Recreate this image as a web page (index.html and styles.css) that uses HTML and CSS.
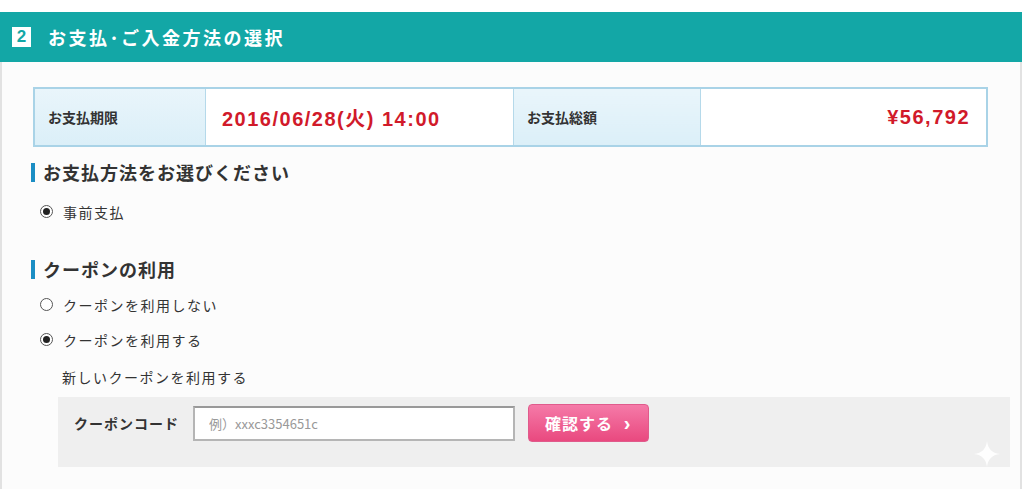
FILE: index.html
```html
<!DOCTYPE html>
<html lang="ja">
<head>
    <meta charset="UTF-8">
    <meta name="viewport" content="width=device-width, initial-scale=1.0">
    <title>お支払・ご入金方法の選択</title>
    <link rel="stylesheet" href="styles.css">
</head>
<body>

    <div class="page">
        <header class="section-head">
            <span class="step-no">2</span>
            <h1>お支払･ご入金方法の選択</h1>
        </header>

        <div class="section-body">
            <table class="summary">
                <tr>
                    <th class="col-label1">お支払期限</th>
                    <td class="col-date">2016/06/28(火) 14:00</td>
                    <th class="col-label2">お支払総額</th>
                    <td class="col-total">¥56,792</td>
                </tr>
            </table>

            <h2 class="sub-title">お支払方法をお選びください</h2>
            <label class="radio-row">
                <span class="radio checked"></span>事前支払
            </label>

            <h2 class="sub-title coupon-title">クーポンの利用</h2>
            <label class="radio-row">
                <span class="radio"></span>クーポンを利用しない
            </label>
            <label class="radio-row">
                <span class="radio checked"></span>クーポンを利用する
            </label>
            <p class="new-coupon">新しいクーポンを利用する</p>

            <div class="coupon-box">
                <span class="coupon-label">クーポンコード</span>
                <input class="coupon-input" type="text" placeholder="例）xxxc3354651c">
                <button class="confirm-btn">確認する <span class="chev">›</span></button>
                <svg class="sparkle" width="26" height="26" viewBox="0 0 26 26">
                    <path d="M13 0 C14 8 18 12 26 13 C18 14 14 18 13 26 C12 18 8 14 0 13 C8 12 12 8 13 0 Z" fill="#ffffff" opacity="0.9"/>
                </svg>
            </div>
        </div>
    </div>

</body>
</html>
```

FILE: styles.css
```css
body {
    font-family: "Noto Sans CJK JP", "Liberation Sans", sans-serif;
    background-color: #fff;
    color: #333;
    margin: 0;
    padding: 0;
}

.page {
    width: 1022px;
    margin-top: 12px;
}

.section-head {
    height: 50px;
    background-color: #13a7a6;
    display: flex;
    align-items: center;
    padding-left: 12px;
}

.step-no {
    width: 19px;
    height: 20px;
    background: #fff;
    color: #13a7a6;
    font-family: "Liberation Sans", sans-serif;
    font-weight: bold;
    font-size: 17px;
    line-height: 20px;
    text-align: center;
}

.section-head h1 {
    margin: 0 0 0 17px;
    color: #fff;
    font-size: 18px;
    font-weight: bold;
    letter-spacing: 2.5px;
}

.section-body {
    border-left: 2px solid #e2e2e2;
    border-right: 2px solid #e2e2e2;
    background: #fcfcfc;
    padding: 25px 10px 22px 31px;
    min-height: 380px;
}

.summary {
    width: 955px;
    height: 60px;
    border-collapse: collapse;
    border: 2px solid #a9d3e7;
}

.summary th,
.summary td {
    border-left: 1px solid #b5d9ea;
    padding: 0 13px;
    text-align: left;
    font-size: 14px;
}

.summary th {
    background: linear-gradient(to bottom, #e9f5fb, #dbeff8);
    font-weight: bold;
    color: #333;
}

.summary td {
    background: #fff;
    color: #d11a2a;
    font-weight: bold;
    font-size: 20px;
    letter-spacing: 1.5px;
    font-family: "Liberation Sans", "Noto Sans CJK JP", sans-serif;
}

.col-label1 { width: 144px; }
.col-date { width: 278px; padding-left: 16px !important; }
.col-label2 { width: 160px; }
.col-total { text-align: right !important; padding-right: 16px !important; }

.sub-title {
    margin: 16px 0 0 -2px;
    padding-left: 8px;
    border-left: 4px solid #1b8ec4;
    font-size: 18px;
    line-height: 19px;
    letter-spacing: 1px;
    font-weight: bold;
    color: #333;
}

.coupon-title {
    margin-top: 31px;
}

.radio-row {
    display: flex;
    align-items: center;
    height: 35px;
    margin-left: 7px;
    font-size: 14px;
    letter-spacing: 1.5px;
    color: #333;
}

.sub-title + .radio-row {
    margin-top: 12px;
}

.coupon-title + .radio-row {
    margin-top: 8px;
}

.radio {
    width: 11px;
    height: 11px;
    border: 1px solid #555;
    border-radius: 50%;
    background: #fff;
    margin-right: 10px;
    position: relative;
}

.radio.checked::after {
    content: "";
    position: absolute;
    left: 2px;
    top: 2px;
    width: 7px;
    height: 7px;
    border-radius: 50%;
    background: #222;
}

.new-coupon {
    margin: 11px 0 0 29px;
    font-size: 14px;
    letter-spacing: 1.5px;
    line-height: 18px;
    color: #333;
}

.coupon-box {
    position: relative;
    margin: 11px 0 0 25px;
    height: 70px;
    background: #efefef;
    display: flex;
    align-items: flex-start;
    padding-top: 9px;
    box-sizing: border-box;
}

.coupon-label {
    margin: 7px 0 0 16px;
    width: 119px;
    font-size: 14px;
    letter-spacing: 1px;
    font-weight: bold;
    color: #333;
}

.coupon-input {
    width: 322px;
    height: 35px;
    box-sizing: border-box;
    border: 2px solid #b5b5b5;
    border-top-color: #999;
    background: #fff;
    padding: 0 14px;
    font-family: "Noto Sans CJK JP", "Liberation Sans", sans-serif;
    font-size: 13px;
}

.coupon-input::placeholder {
    color: #999;
}

.confirm-btn {
    margin: -2px 0 0 13px;
    width: 121px;
    height: 38px;
    border: 1px solid #e05b8c;
    border-radius: 4px;
    background: linear-gradient(to bottom, #f57aa8, #e9497f);
    color: #fff;
    font-family: "Noto Sans CJK JP", sans-serif;
    font-size: 16px;
    letter-spacing: 1px;
    font-weight: bold;
    text-align: left;
    padding-left: 16px;
}

.chev {
    margin-left: 6px;
    font-size: 20px;
    font-family: "Liberation Sans", sans-serif;
}

.sparkle {
    position: absolute;
    right: 10px;
    top: 44px;
}
```
